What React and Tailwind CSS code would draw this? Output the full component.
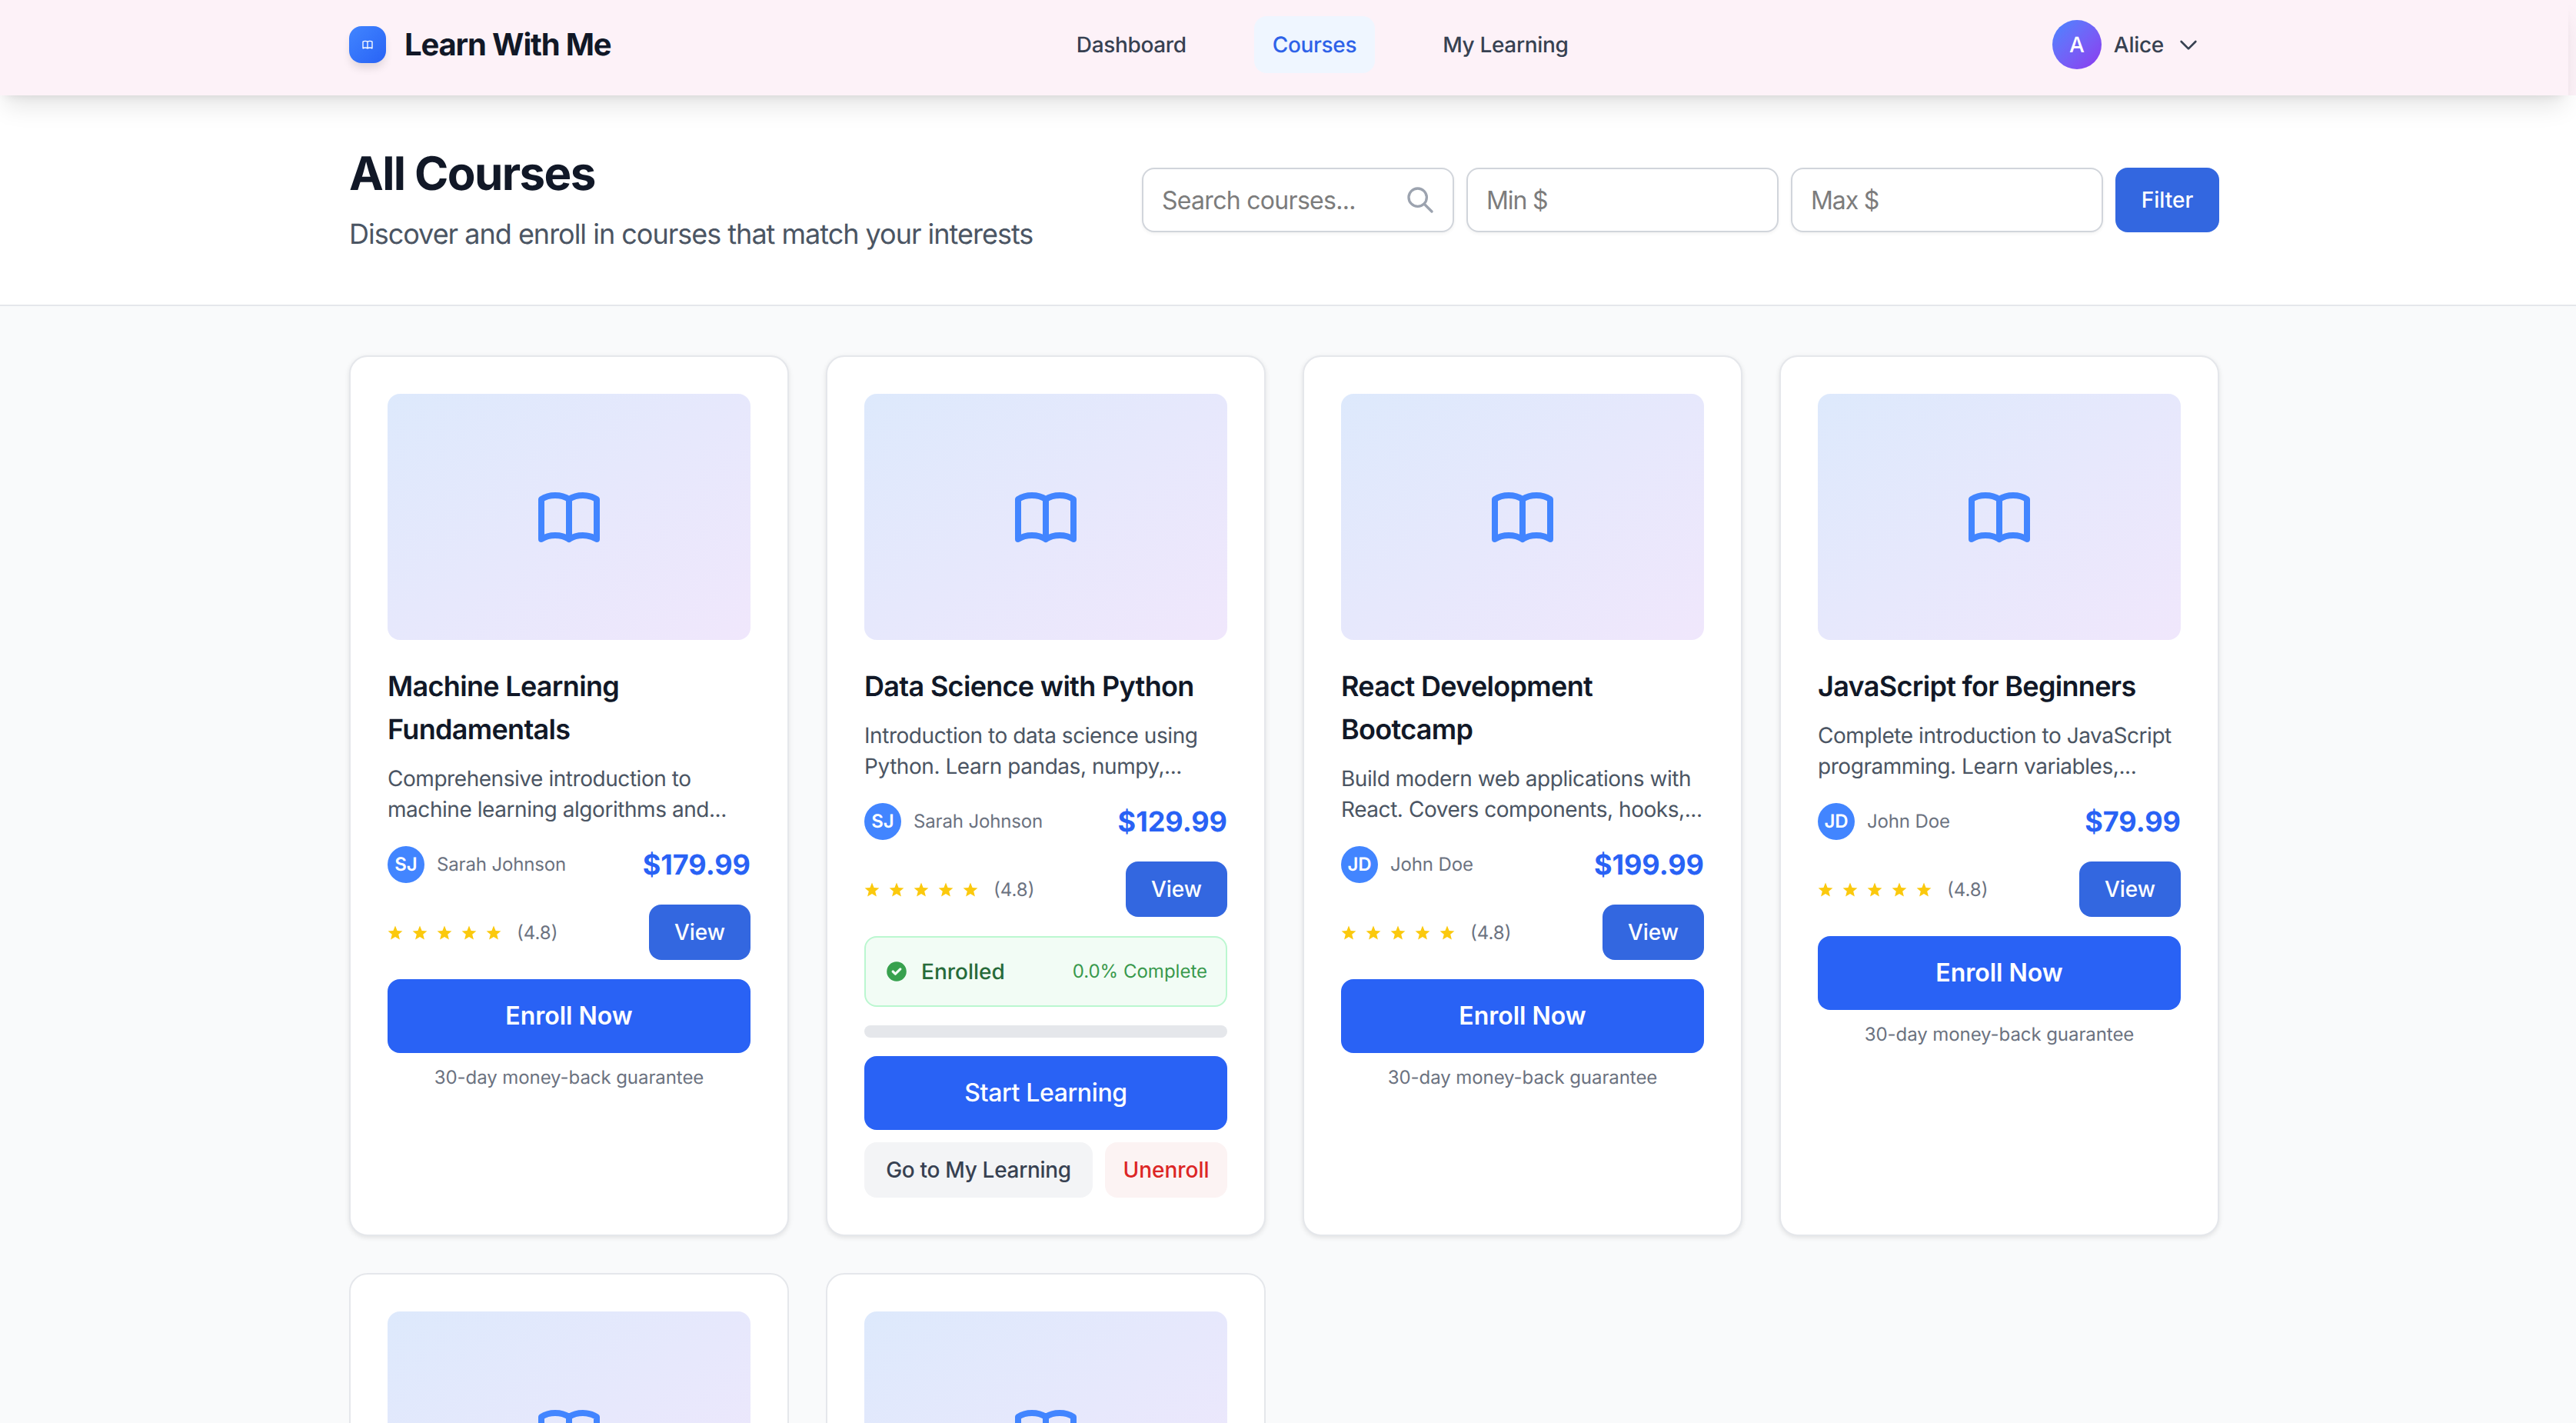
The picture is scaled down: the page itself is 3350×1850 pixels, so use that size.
import React from 'react';

const courses = [
  {
    title: 'Machine Learning Fundamentals',
    desc: 'Comprehensive introduction to machine learning algorithms and...',
    initials: 'SJ',
    teacher: 'Sarah Johnson',
    price: '$179.99',
  },
  {
    title: 'Data Science with Python',
    desc: 'Introduction to data science using Python. Learn pandas, numpy,...',
    initials: 'SJ',
    teacher: 'Sarah Johnson',
    price: '$129.99',
    enrolled: true,
  },
  {
    title: 'React Development Bootcamp',
    desc: 'Build modern web applications with React. Covers components, hooks,...',
    initials: 'JD',
    teacher: 'John Doe',
    price: '$199.99',
  },
  {
    title: 'JavaScript for Beginners',
    desc: 'Complete introduction to JavaScript programming. Learn variables,...',
    initials: 'JD',
    teacher: 'John Doe',
    price: '$79.99',
  },
];

const BookIcon = ({ className, strokeWidth = 2 }) => (
  <svg className={className} fill="none" stroke="currentColor" viewBox="0 0 24 24" strokeWidth={strokeWidth} strokeLinecap="round" strokeLinejoin="round">
    <path d="M12 6.253v13m0-13C10.832 5.477 9.246 5 7.5 5S4.168 5.477 3 6.253v13C4.168 18.477 5.754 18 7.5 18s3.332.477 4.5 1.253m0-13C13.168 5.477 14.754 5 16.5 5c1.747 0 3.332.477 4.5 1.253v13C19.832 18.477 18.247 18 16.5 18c-1.746 0-3.332.477-4.5 1.253" />
  </svg>
);

const Star = () => (
  <svg className="w-[20px] h-[20px] text-[#fbc90d]" viewBox="0 0 20 20" fill="currentColor">
    <polygon points="10,0.6 12.6,7 19.4,7.4 14.2,11.8 15.9,18.6 10,14.9 4.1,18.6 5.8,11.8 0.6,7.4 7.4,7" />
  </svg>
);

const Thumb = () => (
  <div className="h-[320px] rounded-[16px] bg-gradient-to-br from-[#dde9fc] to-[#f0e7fc] flex items-center justify-center">
    <BookIcon className="w-[96px] h-[96px] text-[#4285ff]" />
  </div>
);

const CourseCard = ({ course }) => (
  <div className="bg-white border-2 border-[#e5e7eb] rounded-[24px] p-[48px] shadow-[0_2px_6px_rgba(0,0,0,0.1)]">
    <Thumb />
    <h3 className="mt-[32px] text-[36px] leading-[56px] font-semibold tracking-[-0.019em] text-[#111827]">{course.title}</h3>
    <p className="mt-[16px] text-[28px] leading-[40px] tracking-[-0.016em] text-[#4b5563]">{course.desc}</p>

    <div className="mt-[24px] flex items-center justify-between">
      <div className="flex items-center gap-[16px]">
        <div className="w-[48px] h-[48px] rounded-full bg-[#4285ff] text-white text-[24px] font-semibold flex items-center justify-center">
          {course.initials}
        </div>
        <span className="text-[24px] leading-[32px] tracking-[-0.006em] text-[#6b7280]">{course.teacher}</span>
      </div>
      <span className="text-[36px] leading-[56px] font-bold text-[#2962f5]">{course.price}</span>
    </div>

    <div className="mt-[24px] flex items-center justify-between">
      <div className="flex items-center pt-[2px]">
        <div className="flex items-center gap-[12px]">
          <Star />
          <Star />
          <Star />
          <Star />
          <Star />
        </div>
        <span className="ml-[20px] text-[24px] leading-[32px] text-[#6b7280]">(4.8)</span>
      </div>
      <button className="h-[72px] w-[132px] rounded-[16px] bg-[#3367e0] text-white text-[28px] font-medium">View</button>
    </div>

    {course.enrolled ? (
      <>
        <div className="mt-[25px] px-[24px] py-[24px] border-2 border-[#bbf7d0] bg-[#f2fcf5] rounded-[16px] flex items-center justify-between">
          <div className="flex items-center gap-[16px]">
            <svg className="w-[32px] h-[32px] text-[#38a14e]" viewBox="0 0 20 20" fill="currentColor">
              <path fillRule="evenodd" clipRule="evenodd" d="M10 18a8 8 0 100-16 8 8 0 000 16zm3.707-9.293a1 1 0 00-1.414-1.414L9 10.586 7.707 9.293a1 1 0 00-1.414 1.414l2 2a1 1 0 001.414 0l4-4z" />
            </svg>
            <span className="text-[28px] leading-[40px] font-medium text-[#276b3a]">Enrolled</span>
          </div>
          <span className="text-[24px] leading-[40px] text-[#38994c]">0.0% Complete</span>
        </div>
        <div className="mt-[24px] h-[16px] rounded-full bg-[#e5e7eb]" />
        <button className="mt-[24px] w-full h-[96px] rounded-[16px] bg-[#2962f5] text-white text-[32px] font-medium tracking-[-0.012em]">Start Learning</button>
        <div className="mt-[16px] flex gap-[16px]">
          <button className="flex-1 h-[72px] rounded-[16px] bg-[#f3f4f6] text-[#374151] text-[28px] font-medium tracking-[-0.011em]">Go to My Learning</button>
          <button className="h-[72px] w-[159px] rounded-[16px] bg-[#fcf3f3] text-[#dc2626] text-[28px] font-medium">Unenroll</button>
        </div>
      </>
    ) : (
      <>
        <button className="mt-[25px] w-full h-[96px] rounded-[16px] bg-[#2962f5] text-white text-[32px] font-semibold">Enroll Now</button>
        <p className="mt-[16px] text-center text-[24px] leading-[32px] tracking-[-0.003em] text-[#6b7280]">30-day money-back guarantee</p>
      </>
    )}
  </div>
);

const inputClass =
  'w-[406px] h-[84px] px-[24px] border-2 border-[#d1d5db] rounded-[16px] bg-white text-[32px] shadow-[0_2px_4px_rgba(0,0,0,0.05)] outline-none placeholder:text-[#7c7c7c]';

export default function App() {
  return (
    <div className="h-[1850px] overflow-hidden bg-[#f9fafb] font-['Inter',sans-serif] antialiased [text-rendering:geometricPrecision]">
      <div className="bg-[#fdf2f8]">
        <nav className="relative z-10 w-[3340px] h-[124px] pb-[8px] bg-[#fdf2f8] shadow-[0_20px_30px_-6px_rgba(0,0,0,0.1),0_8px_12px_-8px_rgba(0,0,0,0.1)]">
          <div className="max-w-[2560px] h-full mx-auto px-[64px] flex items-center justify-between">
            <div className="flex items-center gap-[24px]">
              <div className="w-[48px] h-[48px] rounded-[16px] bg-gradient-to-br from-[#4285ff] to-[#2962f5] flex items-center justify-center shadow-[0_8px_12px_-2px_rgba(0,0,0,0.12)]">
                <BookIcon className="w-[16px] h-[16px] text-white" />
              </div>
              <span className="text-[40px] leading-[56px] font-bold tracking-[-0.029em] text-[#111827]">Learn With Me</span>
            </div>

            <div className="flex items-center gap-[64px] text-[28px] font-medium tracking-[-0.012em]">
              <a className="h-[74px] px-[24px] flex items-center rounded-[16px] text-[#374151]">Dashboard</a>
              <a className="h-[74px] px-[24px] flex items-center rounded-[16px] bg-[#eff6ff] text-[#2e62e8]">Courses</a>
              <a className="h-[74px] px-[24px] flex items-center rounded-[16px] text-[#374151]">My Learning</a>
            </div>

            <div className="flex items-center gap-[16px] px-[24px]">
              <div className="w-[64px] h-[64px] rounded-full bg-gradient-to-br from-[#4285ff] to-[#8a35ef] text-white text-[28px] font-medium flex items-center justify-center">
                A
              </div>
              <span className="text-[28px] font-medium tracking-[-0.01em] text-[#374151]">Alice</span>
              <svg className="w-[32px] h-[32px] text-[#374151]" fill="none" stroke="currentColor" viewBox="0 0 24 24" strokeWidth={2} strokeLinecap="round" strokeLinejoin="round">
                <path d="M19 9l-7 7-7-7" />
              </svg>
            </div>
          </div>
        </nav>
      </div>

      <header className="bg-white border-b-2 border-[#e5e7eb]">
        <div className="w-[3340px]">
          <div className="max-w-[2560px] mx-auto px-[64px] py-[64px] flex items-center justify-between">
            <div>
              <h1 className="pt-[2px] text-[60px] leading-[72px] font-bold tracking-[-0.027em] text-[#111827]">All Courses</h1>
              <p className="mt-[14px] text-[36px] leading-[56px] tracking-[-0.028em] text-[#4b5563]">Discover and enroll in courses that match your interests</p>
            </div>
            <div className="flex items-center gap-[16px]">
              <div className="relative">
                <input className={`${inputClass} tracking-[-0.022em]`} placeholder="Search courses..." />
                <svg className="absolute right-[24px] top-[22px] w-[40px] h-[40px] text-[#9ca3af]" fill="none" stroke="currentColor" viewBox="0 0 24 24" strokeWidth={2} strokeLinecap="round" strokeLinejoin="round">
                  <path d="M21 21l-6-6m2-5a7 7 0 11-14 0 7 7 0 0114 0z" />
                </svg>
              </div>
              <input className={`${inputClass} tracking-[-0.035em]`} placeholder="Min $" />
              <input className={`${inputClass} tracking-[-0.035em]`} placeholder="Max $" />
              <button className="w-[135px] h-[84px] rounded-[16px] bg-[#3367e0] text-white text-[28px] font-medium">Filter</button>
            </div>
          </div>
        </div>
      </header>

      <div className="w-[3340px]">
        <main className="max-w-[2560px] mx-auto px-[64px] py-[64px] grid grid-cols-4 gap-[48px] items-stretch">
          {courses.map((course) => (
            <CourseCard key={course.title} course={course} />
          ))}
          <div className="bg-white border-2 border-[#e5e7eb] rounded-[24px] p-[48px]">
            <Thumb />
          </div>
          <div className="bg-white border-2 border-[#e5e7eb] rounded-[24px] p-[48px]">
            <Thumb />
          </div>
        </main>
      </div>
    </div>
  );
}
